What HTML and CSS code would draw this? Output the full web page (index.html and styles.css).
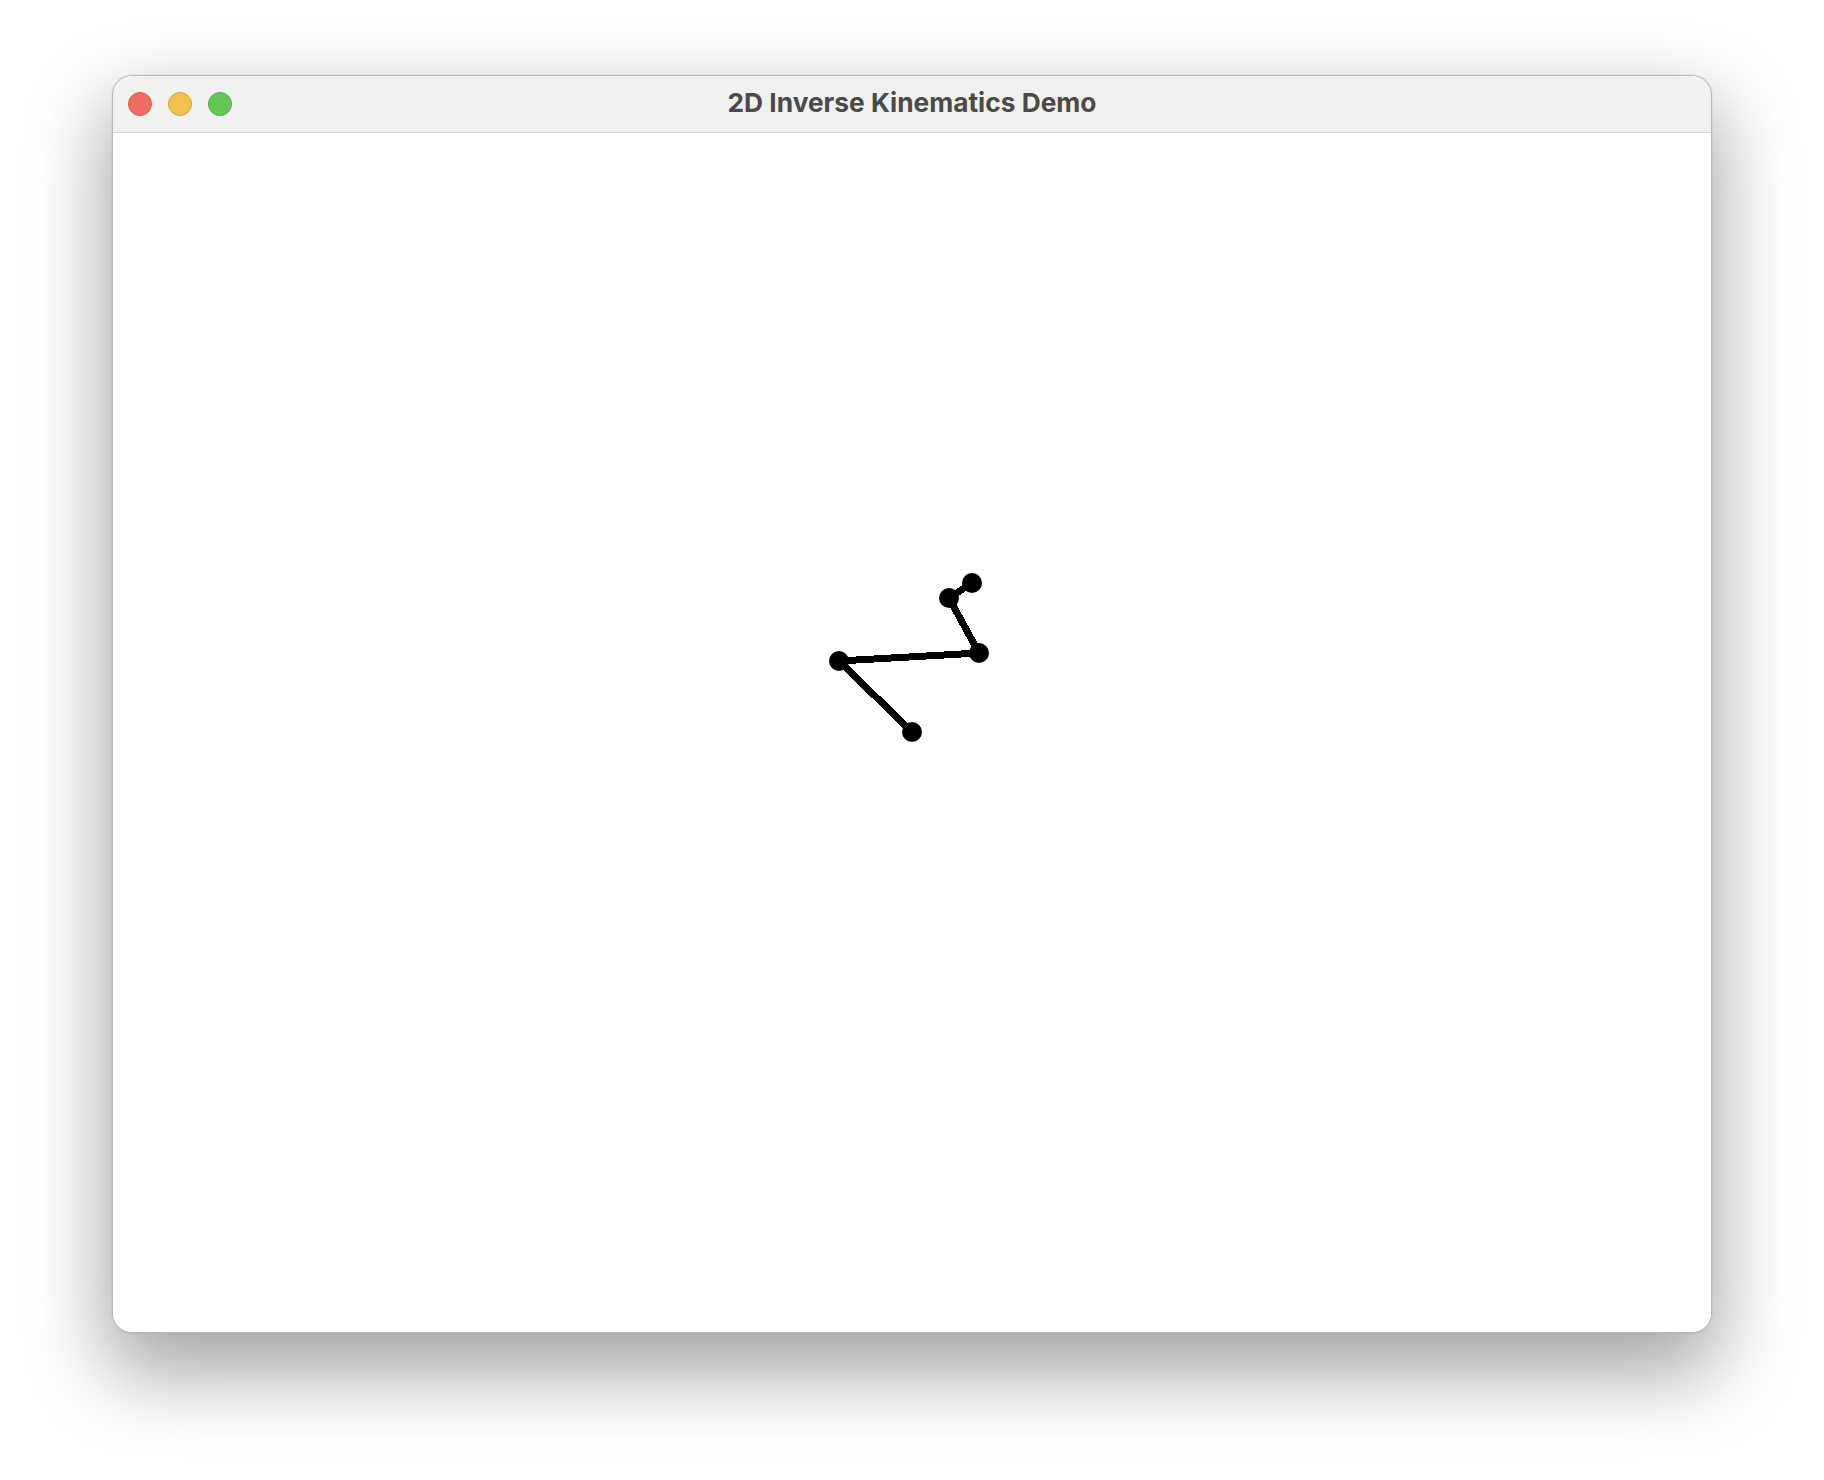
FILE: index.html
```html
<!DOCTYPE html>
<html>
<head>
<meta charset="utf-8">
<title>2D Inverse Kinematics Demo</title>
<link rel="stylesheet" href="styles.css">
</head>
<body>
<div class="desktop">
  <div class="window">
    <div class="titlebar">
      <div class="lights">
        <span class="light red"></span>
        <span class="light yellow"></span>
        <span class="light green"></span>
      </div>
      <div class="title">2D Inverse Kinematics Demo</div>
    </div>
    <div class="content">
      <svg class="canvas" width="1598" height="1199" viewBox="1 0 1598 1199">
        <g stroke="#000" stroke-width="7" fill="none" shape-rendering="crispEdges">
          <line x1="800" y1="599" x2="727" y2="528"/>
          <line x1="727" y1="528" x2="867" y2="520"/>
          <line x1="867" y1="520" x2="837" y2="465"/>
          <line x1="837" y1="465" x2="860" y2="450"/>
        </g>
        <g fill="#000">
          <circle cx="800" cy="599" r="10"/>
          <circle cx="727" cy="528" r="10"/>
          <circle cx="867" cy="520" r="10"/>
          <circle cx="837" cy="465" r="10"/>
          <circle cx="860" cy="450" r="10"/>
        </g>
      </svg>
    </div>
  </div>
</div>
</body>
</html>
```
FILE: styles.css
```css
html, body {
  margin: 0;
  padding: 0;
  background: #ffffff;
}
.desktop {
  width: 1824px;
  height: 1480px;
  padding: 75px 0 0 112px;
  box-sizing: border-box;
  background: #ffffff;
}
.window {
  width: 1600px;
  box-sizing: border-box;
  border: 1px solid rgba(0, 0, 0, 0.28);
  border-radius: 20px;
  overflow: hidden;
  background: #ffffff;
  box-shadow: 0 34px 80px 6px rgba(0, 0, 0, 0.36), 0 0 0 1px rgba(0, 0, 0, 0.04);
}
.titlebar {
  position: relative;
  height: 57px;
  box-sizing: border-box;
  background: #f0f0ef;
  border-bottom: 1px solid #d6d6d5;
  display: flex;
  align-items: center;
  justify-content: center;
}
.lights {
  position: absolute;
  left: 15px;
  top: 16px;
  display: flex;
  gap: 16px;
}
.light {
  width: 24px;
  height: 24px;
  border-radius: 50%;
  box-sizing: border-box;
}
.red { background: #ed6b5f; border: 1px solid #d65649; }
.yellow { background: #f5bf4f; border: 1px solid #d9a23a; }
.green { background: #62c555; border: 1px solid #4ea944; }
.title {
  font-family: Inter, "Liberation Sans", sans-serif;
  font-weight: 700;
  font-size: 26.3px;
  color: #4a4a4a;
  letter-spacing: 0;
  margin-top: -3px;
}
.content {
  height: 1199px;
  background: #ffffff;
}
.canvas {
  display: block;
}
```
